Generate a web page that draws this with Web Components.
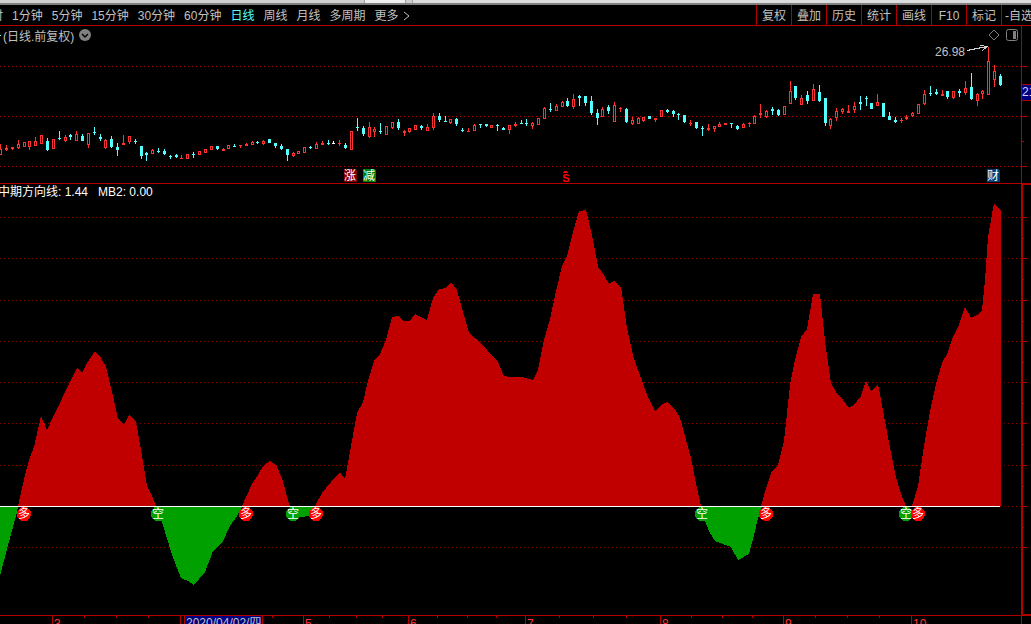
<!DOCTYPE html>
<html lang="zh-CN">
<head>
<meta charset="utf-8">
<title>日线</title>
<style>
    body {
        margin: 0;
        background: #000;
        color: #c0c0c0;
        font-family: "Liberation Sans", "Noto Sans CJK SC", sans-serif;
        font-size: 12px;
    }
</style>
</head>
<body>
<stock-terminal></stock-terminal>

<script>
const RED = '#b00000';

// x high low top bottom kind (r = hollow up, f = filled up, c = down, w = flat)
const CANDLES = `
0 144 155 149 155 r|6 145 151 148 150 f|12 147 150 147 149 f|18 140 149 144 148 r|24 142 147 142 147 r|29 141 150 141 147 r
35 137 146 141 146 r|41 135 144 135 144 r|47 138 151 141 150 c|53 139 149 139 149 r|59 131 140 138 139 c|65 135 142 137 141 r
70 134 140 135 137 c|76 131 141 134 141 r|82 134 141 136 141 c|88 133 148 133 145 r|94 127 135 132 133 c|100 134 141 137 139 c
105 139 149 140 148 r|111 136 148 139 147 c|117 143 156 147 150 c|123 135 145 143 145 f|129 136 144 136 142 r|135 139 144 141 142 c
141 146 159 146 156 c|146 152 161 153 155 c|152 149 154 150 154 r|158 148 153 151 152 c|164 149 155 151 154 c|170 155 159 156 157 c
176 154 158 155 157 c|181 155 159 158 159 f|187 154 159 154 159 r|193 152 158 154 155 c|199 151 155 151 155 r|205 149 153 149 153 r
211 146 150 146 150 r|217 146 150 146 149 c|223 148 151 149 151 f|228 145 149 145 149 r|234 144 147 146 147 c|240 145 148 145 146 f
246 143 146 144 146 f|252 141 145 142 145 r|257 141 144 142 143 c|263 140 145 141 144 r|269 139 143 139 143 c|275 143 148 143 146 c
281 144 150 146 149 c|287 149 161 149 155 c|293 152 157 153 156 r|298 151 154 151 154 r|304 147 153 147 153 r|310 146 149 147 148 c
316 142 149 144 149 r|322 141 145 143 145 f|328 140 145 143 144 c|333 141 144 143 144 w|339 140 146 143 144 f|345 143 149 145 148 c
351 131 150 131 150 r|357 118 131 127 128 c|363 126 136 128 134 c|369 122 138 127 137 r|374 127 137 129 132 r|380 123 134 131 132 c
386 126 135 126 135 r|392 122 129 122 128 r|398 119 130 122 128 c|404 130 136 131 133 f|409 128 133 128 132 r|415 125 130 125 130 r
421 125 130 126 128 c|427 124 131 127 131 r|433 113 130 116 128 r|439 113 122 116 120 c|445 116 122 121 122 c|450 119 124 119 123 r
456 118 126 119 124 c|462 128 132 130 131 c|468 128 132 131 132 f|474 124 131 125 131 r|480 124 128 124 125 c|486 124 127 124 126 c
491 125 128 125 128 r|497 124 131 125 126 c|503 127 130 128 130 c|509 125 134 125 130 r|515 122 127 124 126 f|521 120 124 123 124 c
526 119 126 123 124 c|532 122 129 123 126 r|538 118 125 118 125 r|544 107 119 108 119 r|550 103 112 109 110 c|556 104 111 106 111 r
562 101 107 102 107 r|567 98 107 101 106 c|573 94 109 99 107 r|579 95 106 96 98 c|585 96 106 96 103 c|591 96 115 101 113 c
597 109 125 113 118 c|602 107 117 109 117 r|608 105 114 107 111 c|614 102 122 105 122 r|620 107 112 108 109 f|626 108 123 109 122 c
632 117 125 120 124 r|638 117 124 118 124 r|643 117 122 117 121 r|649 116 119 116 119 c|655 118 122 118 120 f|661 110 117 110 117 r
667 109 113 110 112 c|673 110 117 111 114 c|678 113 120 114 115 c|684 115 123 115 122 c|690 120 126 123 124 f|696 122 129 122 128 c
702 126 136 128 129 c|708 124 131 128 130 f|714 126 132 126 129 r|719 122 127 124 127 r|725 123 125 123 125 f|731 123 128 123 124 c
737 125 130 126 129 c|743 123 128 124 128 r|749 122 127 123 124 f|754 115 124 116 124 r|760 104 118 113 115 f|766 110 118 111 117 r
772 107 115 109 111 c|778 109 116 110 115 c|784 106 115 106 115 r|790 81 104 91 104 r|795 86 100 86 98 c|801 95 105 98 105 r
807 91 104 95 101 c|813 84 101 89 101 r|819 85 102 92 101 c|825 98 126 98 123 c|830 118 129 119 126 r|836 108 121 111 118 r
842 108 114 109 112 r|848 105 113 111 113 f|854 102 113 106 110 r|860 96 110 102 104 c|866 96 106 98 99 c|871 103 109 103 109 c
877 94 106 102 106 r|883 103 117 103 117 c|889 112 120 116 120 c|895 117 123 120 122 c|901 118 123 120 121 f|906 115 120 117 119 f
912 112 117 113 116 r|918 104 114 104 114 r|924 90 105 94 104 r|930 86 96 93 94 c|936 89 95 92 94 c|942 90 96 94 96 f
947 91 99 91 97 c|953 91 99 91 98 r|959 89 97 91 93 c|965 81 95 88 93 r|971 73 100 87 99 c|977 93 106 94 101 r
982 90 99 91 94 r|988 47 95 61 95 r|994 65 87 71 80 r|1000 74 86 76 85 c`.trim().split(/[|\n]/).map(row => row.split(' '));

const UP_AREAS = [
    '18,506 22,488 26,471 30,457 34,447 41,416 47,430 54,415 70,382 77,368 82,373 87,363 95,351 101,358 106,367 113,396 118,419 124,425 129,415 136,422 141,450 147,486 152,496 156,506',
    '242,506 246,497 252,484 258,475 263,466 270,461 276,465 282,478 288,500 290,506',
    '315,506 322,493 331,482 340,472 345,479 357,413 363,402 368,381 374,361 380,354 386,340 392,317 398,316 404,321 410,321 415,314 421,317 427,320 433,298 439,289 446,288 451,282 457,290 463,312 469,333 480,342 487,350 498,362 504,376 510,377 522,377 533,380 538,370 544,340 550,319 556,291 562,266 567,256 573,232 579,211 586,210 592,235 598,267 604,275 609,284 614,281 621,287 627,328 633,355 638,370 648,397 655,411 661,405 667,402 675,409 680,418 685,436 691,458 697,488 701,506',
    '761,506 766,488 772,471 778,465 784,441 790,385 795,360 801,337 807,329 813,294 820,294 825,341 831,383 837,394 843,400 849,408 854,405 861,396 866,381 871,391 878,384 884,416 890,448 896,477 901,494 906,506',
    '912,506 918,486 924,446 930,411 936,384 942,363 947,354 953,337 959,325 965,307 971,318 977,315 982,310 985,280 988,237 994,203 1001,211 1001,506'
];

const DOWN_AREAS = [
    '0,507 18,507 16,516 8,545 0,576',
    '154,507 162,522 172,555 181,578 188,581 194,585 205,572 213,551 223,541 230,526 237,516 242,507',
    '290,507 293,514 300,517 310,516 316,507',
    '700,507 705,521 709,531 715,541 723,544 731,547 738,560 749,554 754,535 758,518 762,507'
];

const SIGNALS = [[24, '多'], [158, '空'], [246, '多'], [293, '空'], [316, '多'], [702, '空'], [766, '多'], [906, '空'], [918, '多']];

function dots(y, color) {
    return `<path d="M0 ${y}.5H1021" stroke="${color}" stroke-dasharray="1 3"/>`;
}

function candle([x, high, low, top, bottom, kind]) {
    const color = { r: '#ff3232', f: '#ff3232', c: '#54ffff', w: '#fff' }[kind];
    const core = kind === 'r' && bottom - top > 2
        ? `<rect x="${x}" y="${+top + 1}" width="1" height="${bottom - top - 2}" fill="#000"/>` : '';
    return `<rect x="${x}" y="${high}" width="1" height="${low - high}" fill="${color}"/>` +
        `<rect x="${x - 1}" y="${top}" width="3" height="${bottom - top}" fill="${color}"/>` + core;
}

class StockTerminal extends HTMLElement {
    connectedCallback() {
        this.attachShadow({ mode: 'open' });
        this.shadowRoot.innerHTML = `
            <style>
                :host {
                    display: grid;
                    grid-template-columns: minmax(0, 1fr);
                    grid-template-rows: auto auto minmax(0, 158fr) minmax(0, 431fr) auto;
                    height: 100vh;
                    overflow: hidden;
                }
            </style>
            <window-edge></window-edge>
            <period-toolbar></period-toolbar>
            <price-panel></price-panel>
            <trend-panel>
                <span>中期方向线: 1.44</span>
                <span>MB2: 0.00</span>
            </trend-panel>
            <time-axis></time-axis>
        `;
    }
}

class WindowEdge extends HTMLElement {
    connectedCallback() {
        this.attachShadow({ mode: 'open' });
        this.shadowRoot.innerHTML = `
            <style>
                :host {
                    display: flex;
                    height: 3px;
                    background: #d0d0d0;
                    border-bottom: 2px solid #808080;
                }
                i {
                    background: #dcdcdc;
                    border-left: 1px solid #a0a0a0;
                }
                .tab {
                    width: 40px;
                    margin: 0 6px 0 364px;
                    background: #f0f0f0;
                    border-right: 1px solid #a0a0a0;
                }
                .rest { flex: 1; }
            </style>
            <i class="tab"></i><i class="rest"></i>
        `;
    }
}

class PeriodToolbar extends HTMLElement {
    connectedCallback() {
        const periods = ['时', '1分钟', '5分钟', '15分钟', '30分钟', '60分钟', '日线', '周线', '月线', '多周期'];
        const tools = ['复权', '叠加', '历史', '统计', '画线', 'F10', '标记', '-自选'];
        this.attachShadow({ mode: 'open' });
        this.shadowRoot.innerHTML = `
            <style>
                :host {
                    display: flex;
                    justify-content: space-between;
                    height: 20px;
                    overflow: hidden;
                    border-bottom: 1px solid ${RED};
                }
                nav, .tools { display: flex; flex: none; }
                nav { gap: 9px; margin-left: -9px; }
                button {
                    display: flex;
                    align-items: center;
                    justify-content: center;
                    gap: 4px;
                    padding: 1px 0 0;
                    border: 0;
                    background: none;
                    color: inherit;
                    font: inherit;
                    line-height: 20px;
                    white-space: nowrap;
                }
                button[aria-pressed="true"] { color: #54ffff; }
                .tools button {
                    box-sizing: border-box;
                    width: 35px;
                    border-left: 1px solid ${RED};
                }
                .tools button:last-child {
                    width: 30px;
                    padding-left: 3px;
                    justify-content: flex-start;
                    overflow: hidden;
                }
                svg { fill: none; stroke: currentColor; }
            </style>
            <nav>
                ${periods.map(p => `<button type="button" aria-pressed="${p === '日线'}">${p}</button>`).join('')}
                <button type="button">更多<svg width="7" height="10"><path d="M1 1L6 5L1 9"/></svg></button>
            </nav>
            <div class="tools">${tools.map(t => `<button type="button">${t}</button>`).join('')}</div>
        `;
    }
}

class PricePanel extends HTMLElement {
    connectedCallback() {
        this.attachShadow({ mode: 'open' });
        this.shadowRoot.innerHTML = `
            <style>
                :host {
                    display: grid;
                    grid-template-columns: minmax(0, 1fr) 10px;
                    grid-template-rows: minmax(0, 1fr);
                    border-bottom: 1px solid ${RED};
                }
                svg { display: block; }
                .chart, .scale { width: 100%; height: 100%; }
                .chart, header { grid-area: 1 / 1; }
                header {
                    display: flex;
                    align-items: center;
                    align-self: start;
                    height: 18px;
                    padding-right: 3px;
                }
                .mark { width: 1px; height: 1px; margin-right: 2px; background: #54ffff; }
                button { padding: 0; border: 0; background: none; color: #808080; }
                .menu { margin: 0 auto 0 5px; }
                .side { margin-left: 6px; }
            </style>
            <svg class="chart" viewBox="0 26 1021 157" preserveAspectRatio="xMaxYMin meet" shape-rendering="crispEdges">
                ${[66, 116, 166].map(y => dots(y, '#b40000')).join('')}
                ${CANDLES.map(candle).join('')}
                <text x="935" y="56" font-size="12" fill="#c0c0c0">26.98</text>
                <path d="M967 50.5L987 46.5M980 45.5L987 46.5L982 51" fill="none" stroke="#d0d0d0"/>
                <path d="M344 169h11l2 2v11h-13z" fill="#800000"/>
                <path d="M363 169h11l2 2v11h-13z" fill="#008000"/>
                <path d="M987 169h11l2 2v11h-13z" fill="#003c78"/>
                <g fill="#fff" font-size="12" text-anchor="middle">
                    <text x="350" y="180">涨</text>
                    <text x="369" y="180">减</text>
                    <text x="993" y="180">财</text>
                </g>
                <text x="566" y="182" font-size="11" font-weight="bold" text-anchor="middle" fill="#f00">S</text>
                <path d="M563 173h5v-1h-1v-1h-3v1h-1z" fill="#f00"/>
            </svg>
            <header>
                <span class="mark"></span>
                <span>(日线.前复权)</span>
                <button class="menu" type="button" aria-label="菜单">
                    <svg width="12" height="12"><circle cx="6" cy="6" r="6" fill="#808080"/><path d="M3 5l3 3 3-3" fill="none" stroke="#000" stroke-width="1.5"/></svg>
                </button>
                <button type="button" aria-label="标记">
                    <svg width="12" height="12" fill="none" stroke="currentColor"><path d="M6 1l5 5-5 5-5-5z"/></svg>
                </button>
                <button class="side" type="button" aria-label="侧栏">
                    <svg width="12" height="12"><rect x=".5" y=".5" width="11" height="11" rx="2" fill="none" stroke="currentColor"/><path d="M7 2h3v8H7z" fill="currentColor"/></svg>
                </button>
            </header>
            <svg class="scale" viewBox="1021 26 10 157" preserveAspectRatio="xMinYMin meet" shape-rendering="crispEdges">
                <path d="M1021 26h1v157h-1zM1022 66h5v1h-5zM1022 116h5v1h-5zM1022 141h2v1h-2zM1022 166h5v1h-5zM1022 84h9v1h-9zM1022 100h9v1h-9z" fill="${RED}"/>
                <rect x="1022" y="85" width="9" height="15" fill="#000080"/>
                <text x="1022" y="96" font-size="12" fill="#d0d0ff">21</text>
            </svg>
        `;
    }
}

class TrendPanel extends HTMLElement {
    connectedCallback() {
        const levels = [217, 258, 300, 341, 382, 423, 465, 506, 547];
        const halves = [238, 279, 321, 362, 403, 444, 486, 527];
        this.attachShadow({ mode: 'open' });
        this.shadowRoot.innerHTML = `
            <style>
                :host {
                    display: grid;
                    grid-template-columns: minmax(0, 1fr) 10px;
                    grid-template-rows: minmax(0, 1fr);
                    color: #fff;
                }
                svg { display: block; width: 100%; height: 100%; }
                .chart, header { grid-area: 1 / 1; }
                header {
                    display: flex;
                    gap: 10px;
                    align-self: start;
                    margin-left: -2px;
                    line-height: 16px;
                }
            </style>
            <svg class="chart" viewBox="0 184 1021 431" preserveAspectRatio="xMaxYMin meet" shape-rendering="crispEdges">
                ${levels.map(y => dots(y, '#8c0000')).join('')}
                ${UP_AREAS.map(p => `<polygon points="${p}" fill="#c00000"/>`).join('')}
                ${DOWN_AREAS.map(p => `<polygon points="${p}" fill="#00a000"/>`).join('')}
                <rect x="0" y="506" width="1000" height="1" fill="#fff"/>
                ${SIGNALS.map(([x, label]) => `
                    <circle cx="${x}" cy="514" r="7" fill="${label === '多' ? '#f00' : '#00a000'}"/>
                    <text x="${x}" y="518" font-size="12" text-anchor="middle" fill="#fff">${label}</text>`).join('')}
            </svg>
            <header><slot></slot></header>
            <svg viewBox="1021 184 10 431" preserveAspectRatio="xMinYMin meet" shape-rendering="crispEdges">
                <path d="M1021 184h10v1h-8v429h8v1h-10z" fill="${RED}"/>
                ${levels.map(y => `<rect x="1023" y="${y}" width="4" height="1" fill="${RED}"/>`).join('')}
                ${halves.map(y => `<rect x="1023" y="${y}" width="1" height="1" fill="${RED}"/>`).join('')}
            </svg>
        `;
    }
}

class TimeAxis extends HTMLElement {
    connectedCallback() {
        const months = [[52, '3'], [303, '5'], [408, '6'], [525, '7'], [660, '8'], [783, '9'], [911, '10']];
        const weeks = [84, 116, 148, 272, 329, 356, 382, 437, 467, 496, 559, 593, 626, 691, 722, 752, 815, 847, 879];
        this.attachShadow({ mode: 'open' });
        this.shadowRoot.innerHTML = `
            <style>
                :host {
                    display: block;
                    height: 8px;
                    overflow: hidden;
                    border-top: 1px solid ${RED};
                }
                svg { display: block; width: 100%; height: 100%; }
            </style>
            <svg viewBox="0 616 1031 8" preserveAspectRatio="xMinYMin meet" shape-rendering="crispEdges">
                ${weeks.map(x => `<rect x="${x}" y="616" width="1" height="2" fill="${RED}"/>`).join('')}
                ${months.map(([x, label]) => `
                    <rect x="${x}" y="616" width="1" height="8" fill="${RED}"/>
                    <text x="${x + 2}" y="628" font-size="12" fill="#ff3232">${label}</text>`).join('')}
                <path d="M180 616h1v8h-1zM184 616h79v8h-79zM1021 616h1v8h-1z" fill="${RED}"/>
                <rect x="185" y="616" width="77" height="8" fill="#000080"/>
                <text x="186" y="627" font-size="12" fill="#c0c0c0">2020/04/02/四</text>
            </svg>
        `;
    }
}

customElements.define('window-edge', WindowEdge);
customElements.define('period-toolbar', PeriodToolbar);
customElements.define('price-panel', PricePanel);
customElements.define('trend-panel', TrendPanel);
customElements.define('time-axis', TimeAxis);
customElements.define('stock-terminal', StockTerminal);
</script>
</body>
</html>
